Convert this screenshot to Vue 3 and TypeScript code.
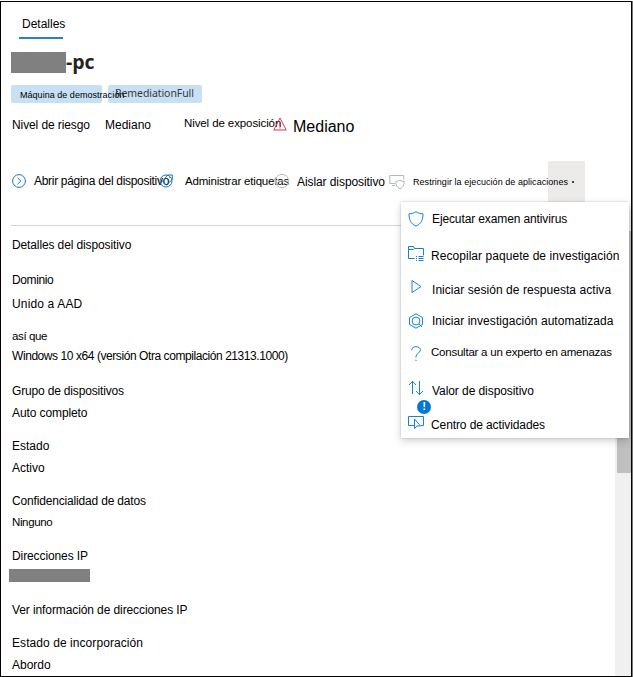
<script setup lang="ts">
interface Field {
  label: string
  labelClass: string
  value?: string
  valueClass?: string
  rowClass: string
  redacted?: boolean
}

interface MenuItem {
  id: string
  text: string
}

const fields: Field[] = [
  { label: 'Dominio', labelClass: 'tightest', value: 'Unido a AAD', valueClass: 'wide', rowClass: 'domain' },
  { label: 'así que', labelClass: 'small', value: 'Windows 10 x64 (versión Otra compilación 21313.1000)', valueClass: 'os-text', rowClass: 'os' },
  { label: 'Grupo de dispositivos', labelClass: 'tighter', value: 'Auto completo', valueClass: 'tight', rowClass: 'regular' },
  { label: 'Estado', labelClass: '', value: 'Activo', valueClass: '', rowClass: 'regular' },
  { label: 'Confidencialidad de datos', labelClass: 'tighter', value: 'Ninguno', valueClass: 'small', rowClass: 'sensitivity' },
  { label: 'Direcciones IP', labelClass: 'tight', rowClass: 'address', redacted: true },
  { label: 'Ver información de direcciones IP', labelClass: 'tight', rowClass: 'ip-link' },
  { label: 'Estado de incorporación', labelClass: 'loose', value: 'Abordo', valueClass: '', rowClass: 'regular' },
]

const menu: MenuItem[] = [
  { id: 'scan', text: 'Ejecutar examen antivirus' },
  { id: 'collect', text: 'Recopilar paquete de investigación' },
  { id: 'live', text: 'Iniciar sesión de respuesta activa' },
  { id: 'auto', text: 'Iniciar investigación automatizada' },
  { id: 'expert', text: 'Consultar a un experto en amenazas' },
  { id: 'value', text: 'Valor de dispositivo' },
  { id: 'center', text: 'Centro de actividades' },
]
</script>

<template>
  <main class="panel">
    <nav class="tabs"><span class="tab">Detalles</span></nav>

    <h1 class="title"><span class="mask"></span><span class="name">-pc</span></h1>

    <div class="tags">
      <span class="tag first">Máquina de demostración</span>
      <span class="tag second">RemediationFull</span>
    </div>

    <div class="levels">
      <span class="risk">Nivel de riesgo</span>
      <span class="risk-value">Mediano</span>
      <span class="exposure">Nivel de exposición</span>
      <svg class="warning" viewBox="0 0 14 14"><path d="M7 1 13.2 13H.8ZM7 5v4M7 10.3v1.2" /></svg>
      <span class="exposure-value">Mediano</span>
    </div>

    <div class="toolbar">
      <button class="action open">
        <svg class="icon" viewBox="0 0 16 16"><circle cx="8" cy="8" r="6.4" /><path d="m6.500 4.800 3.300 3.200-3.300 3.200" /></svg>
        <span>Abrir página del dispositivo</span>
      </button>
      <button class="action labels">
        <svg class="icon" viewBox="0 0 16 16"><circle cx="8" cy="8" r="6" /><path d="M4.500 8.500 9.600 2h4.700v4.500L8.400 12ZM11.300 4.600h.8" /></svg>
        <span>Administrar etiquetas</span>
      </button>
      <button class="action isolate">
        <svg class="icon muted" viewBox="0 0 16 16"><circle cx="8" cy="8" r="6.7" /><path d="M4.500 8h7" /></svg>
        <span>Aislar dispositivo</span>
      </button>
      <button class="action restrict">
        <svg class="icon muted" viewBox="0 0 16 16"><path d="M6 9.500H.8v-8h14v4M3 11.500h3M11 6.200c1.400.9 2.800 1.100 4.200 1.100 0 3.900-.9 6-4.200 7.500-3.300-1.500-4.200-3.600-4.200-7.500 1.400 0 2.800-.2 4.200-1.100Z" /></svg>
        <span>Restringir la ejecución de aplicaciones</span>
      </button>
      <button class="more"><i></i></button>
    </div>

    <div class="body">
      <section class="details">
        <h2 class="heading">Detalles del dispositivo</h2>
        <dl class="fields">
          <div v-for="field in fields" :key="field.label" class="field" :class="field.rowClass">
            <dt :class="field.labelClass">{{ field.label }}</dt>
            <dd v-if="field.redacted" class="redacted"></dd>
            <dd v-else-if="field.value" :class="field.valueClass">{{ field.value }}</dd>
          </div>
        </dl>
      </section>
      <div class="scrollbar"><div class="thumb"></div></div>
    </div>

    <ul class="menu">
      <li v-for="item in menu" :key="item.id" class="entry" :class="item.id">
        <svg class="icon" viewBox="0 0 16 16">
          <path v-if="item.id === 'scan'" d="M8 .8C10.400 2.300 12.600 2.700 15 2.700 15 8.800 13.500 12.500 8 15.200 2.500 12.500 1 8.800 1 2.700 3.400 2.700 5.600 2.300 8 .8Z" />
          <path v-else-if="item.id === 'collect'" d="M6.500 13.500H.5V1.500h5l1 2H15.500v7M.5 4.500h5l1-1M8 11.500h1M10.500 11.500h5M8 13.500h1M10.500 13.500h5M8 15.500h1M10.500 15.500h5" />
          <path v-else-if="item.id === 'live'" d="M4 1.500v12L13 7.500Z" />
          <g v-else-if="item.id === 'auto'">
            <path d="m8 .8 6.500 3.700v7L8 15.200l-6.500-3.700v-7ZM11 11l3 3" />
            <circle cx="8" cy="8" r="3.900" />
          </g>
          <path v-else-if="item.id === 'expert'" d="M3.700 4.300C3.700 2 5.400.7 8 .7s4.300 1.300 4.300 3.400C12.300 7 8 7.300 8 10.500v1M8 13.700V15" />
          <path v-else-if="item.id === 'value'" d="M4.500 14V1.500M1 5l3.500-3.700L8 5M11.500 1v13.500M8 11l3.500 3.700L15 11" />
          <path v-else d="M6 10.500H.5v-9h15v9H13M6.500 4v9.500l2.500-2.500h3.500Z" />
        </svg>
        <span>{{ item.text }}</span>
        <b v-if="item.id === 'center'" class="badge">!</b>
      </li>
    </ul>
  </main>
</template>

<style>
body {
  margin: 0;
  background: #fff;
}
</style>

<style scoped>
* {
  box-sizing: border-box;
}

.panel {
  position: relative;
  display: flex;
  flex-direction: column;
  width: 632px;
  height: 676px;
  margin-top: 1px;
  padding-left: 10px;
  border: 1px solid #000;
  box-shadow: 1px 0 #777;
  background: #fff;
  color: #000;
  font: 12px/16px "Liberation Sans", Arial, sans-serif;
  white-space: nowrap;
}

.tabs {
  height: 50px;
  padding: 14px 0 0 8px;
}

.tab {
  display: block;
  width: 44px;
  height: 23px;
  padding-left: 3px;
  border-bottom: 2px solid #2b7cd3;
}

.title {
  display: flex;
  height: 33px;
  margin: 0;
  color: #252423;
  font: 700 19.5px/22px "Open Sans", "Noto Sans", sans-serif;
}

.name {
  margin-top: -1px;
}

.mask {
  width: 55px;
  height: 21px;
  background: #808080;
}

.tags {
  display: flex;
  gap: 6px;
  height: 32px;
}

.tag {
  height: 18px;
  border-radius: 2px;
  background: #c7e0f4;
}

.first {
  z-index: 1;
  width: 91px;
  padding: 2px 0 0 9px;
  font-size: 9px;
  letter-spacing: 0.03px;
}

.second {
  width: 94px;
  padding-left: 7px;
  color: #383838;
  font: 10.5px/17px "Noto Sans", "Open Sans", sans-serif;
  letter-spacing: -0.07px;
}

.levels {
  display: flex;
  height: 44px;
}

.risk {
  width: 94px;
  padding-left: 1px;
  letter-spacing: -0.1px;
}

.risk-value {
  width: 79px;
}

.exposure {
  width: 89px;
  margin-top: -2px;
  font-size: 11.5px;
  letter-spacing: -0.1px;
}

.warning {
  width: 14px;
  height: 14px;
  margin-right: 6px;
  fill: none;
  stroke: #d9364c;
}

.exposure-value {
  margin-top: 1px;
  font-size: 16px;
  line-height: 18px;
}

.toolbar {
  display: flex;
  width: 575px;
  height: 41px;
}

.action {
  display: flex;
  align-items: flex-start;
  height: 41px;
  padding: 12px 0 0;
  border: 0;
  background: none;
  color: inherit;
  font: inherit;
  white-space: nowrap;
}

.action span {
  flex: none;
}

.icon {
  flex: none;
  width: 16px;
  height: 16px;
  fill: none;
  stroke: #1674c4;
  stroke-width: 1;
}

.icon.muted {
  stroke: #b9b7b5;
}

.open {
  width: 147px;
  gap: 7px;
  letter-spacing: -0.3px;
}

.labels {
  width: 116px;
  gap: 11px;
  font-size: 11.5px;
  letter-spacing: -0.19px;
}

.isolate {
  width: 115px;
  gap: 7px;
  letter-spacing: -0.08px;
}

.isolate span {
  margin-top: 1px;
}

.restrict {
  z-index: 1;
  width: 159px;
  gap: 8px;
  font-size: 9px;
  letter-spacing: 0.05px;
}

.restrict .icon {
  margin-top: 1px;
}

.restrict span {
  margin-top: 1px;
}

.more {
  display: flex;
  align-items: flex-start;
  width: 37px;
  height: 41px;
  padding: 20px 0 0 24px;
  border: 0;
  background: #edebe9;
}

.more i {
  width: 2px;
  height: 2px;
  background: #444;
}

.body {
  display: flex;
  height: 474px;
}

.details {
  width: 604px;
  padding-top: 23px;
}

.heading {
  height: 47px;
  margin: 0;
  padding: 11px 0 0 1px;
  border-top: 1px solid #d6d6d6;
  font: inherit;
  letter-spacing: -0.12px;
}

.fields {
  margin: 0;
  padding-left: 1px;
}

.field {
  display: flex;
  flex-direction: column;
  height: 55px;
  gap: 6px;
}

.field dd {
  margin: 0;
}

.domain {
  height: 56px;
  gap: 8px;
}

.os {
  gap: 4px;
}

.sensitivity {
  gap: 5px;
}

.address {
  height: 54px;
  gap: 5px;
}

.ip-link {
  height: 33px;
}

.field .redacted {
  width: 81px;
  height: 13px;
  margin-left: -3px;
  background: #808080;
}

.tight {
  letter-spacing: -0.1px;
}

.tighter {
  letter-spacing: -0.17px;
}

.tightest {
  letter-spacing: -0.4px;
}

.wide {
  letter-spacing: 0.15px;
}

.loose {
  letter-spacing: 0.07px;
}

.small {
  font-size: 11.5px;
  letter-spacing: -0.37px;
}

.os-text {
  letter-spacing: -0.43px;
}

.scrollbar {
  width: 16px;
  height: 466px;
  margin-top: 8px;
  padding: 21px 0 0 2px;
  background: #f0f0f0;
}

.thumb {
  height: 242px;
  background: #bfbfbf;
}

.menu {
  position: absolute;
  top: 200px;
  left: 400px;
  z-index: 2;
  width: 228px;
  height: 236px;
  margin: 0;
  padding: 7px 0 0 7px;
  background: #fff;
  box-shadow: 0 3px 8px rgb(0 0 0 / 18%), 0 0 2px rgb(0 0 0 / 20%);
  list-style: none;
}

.entry {
  position: relative;
  display: flex;
  align-items: flex-start;
  gap: 8px;
}

.entry .icon {
  stroke: #1683d8;
}

.scan {
  height: 36px;
  padding-top: 2px;
  letter-spacing: -0.12px;
}

.collect {
  height: 33px;
  gap: 7px;
  letter-spacing: 0.05px;
}

.collect span {
  margin-top: 3px;
}

.live {
  height: 34px;
  padding-top: 1px;
  letter-spacing: 0.05px;
}

.live span {
  margin-top: 3px;
}

.auto {
  height: 31px;
  padding-top: 1px;
  letter-spacing: 0.04px;
}

.expert {
  height: 36px;
  padding-top: 1px;
  gap: 7px;
  font-size: 11.5px;
  letter-spacing: -0.23px;
}

.expert .icon {
  margin-top: 2px;
}

.value {
  height: 35px;
  padding-top: 1px;
  letter-spacing: -0.07px;
}

.value span {
  margin-top: 3px;
}

.center {
  padding-top: 1px;
  gap: 7px;
  letter-spacing: -0.1px;
}

.center span {
  margin-top: 2px;
}

.badge {
  position: absolute;
  top: -14px;
  left: 9px;
  width: 14px;
  height: 14px;
  border-radius: 50%;
  background: #0078d4;
  color: #fff;
  font-size: 10px;
  line-height: 14px;
  text-align: center;
}
</style>
